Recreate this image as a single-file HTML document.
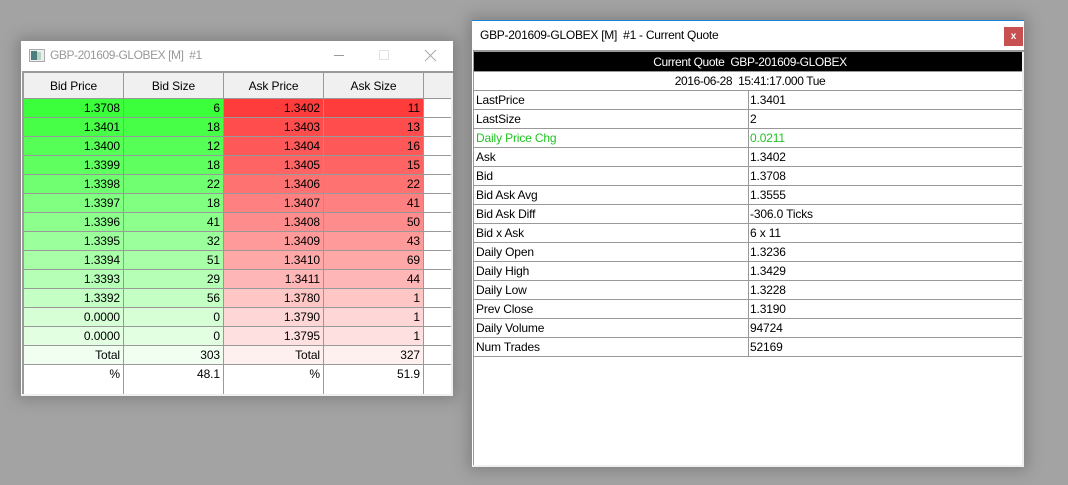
<!DOCTYPE html>
<html><head><meta charset="utf-8"><style>
html,body{margin:0;padding:0;width:1068px;height:485px;overflow:hidden;background:#a3a3a3;font:12px/18px "Liberation Sans",sans-serif;color:#000}
div{position:absolute;box-sizing:border-box;white-space:pre}
#p{left:0;top:0;width:1068px;height:485px;overflow:hidden;background:#a3a3a3}
.win{background:#fff;box-shadow:0 0 14px 3px rgba(60,60,60,.35)}
.r{left:3px;width:400px;height:19px;border-bottom:1px solid #999;letter-spacing:-.1px}
.r div{top:0;width:100px;height:18px;border-right:1px solid #999;text-align:right;padding-right:3px}
.r div:nth-child(2){left:100px}.r div:nth-child(3){left:200px}.r div:nth-child(4){left:300px}
.l{left:403px;width:27px;height:1px;background:#999}
.h div{text-align:center;padding:0;height:25px;line-height:27px;background:#f0f0f0}
.q{left:2px;width:548px;height:19px;border-bottom:1px solid #999;letter-spacing:-.15px}
.q div{top:0;height:18px;padding-left:2px}
.q div:first-child{left:0;width:275px;border-right:1px solid #999}
.q div:last-child{left:275px;width:270px;padding-left:1px}
.g{color:#1fc41f}
.c{text-align:center}
</style></head><body>
<div id="p">
<div class="win" style="left:21px;top:41px;width:432px;height:355px">
  <svg style="position:absolute;left:8px;top:8px" width="16" height="13"><rect x=".5" y=".5" width="15" height="12" fill="#eee" stroke="#aaa"/><rect x="2" y="2" width="6" height="9" fill="#4e7f80"/><rect x="8" y="3" width="4" height="8" fill="#b8d4c8"/></svg>
  <div style="left:29px;top:5px;color:#999;letter-spacing:-.44px">GBP-201609-GLOBEX [M]  #1</div>
  <svg style="position:absolute;left:312px;top:8px" width="110" height="14" fill="none"><path d="M1 6.5H11" stroke="#999"/><rect x="46.500" y="1.500" width="9" height="9" stroke="#e2e2e2"/><path d="M92 1L103 12M103 1L92 12" stroke="#aaa"/></svg>
  <div style="left:1px;top:30px;width:431px;height:2px;background:#999"></div>
  <div style="left:1px;top:30px;width:2px;height:324px;background:#999"></div>
  <div style="left:0;top:353px;width:432px;height:2px;background:#f0f0f0"></div>
  <div style="left:430px;top:32px;width:2px;height:323px;background:#f0f0f0"></div>
  <div class="r h" style="top:32px;height:26px"><div style="left:0">Bid Price</div><div>Bid Size</div><div>Ask Price</div><div>Ask Size</div></div>
  <div style="left:403px;top:32px;width:27px;height:25px;background:#f0f0f0"></div>
  <div class="r" style="top:58px"><div style="left:0;background:#3cff3c">1.3708</div><div style="background:#3cff3c">6</div><div style="background:#ff3c3c">1.3402</div><div style="background:#ff3c3c">11</div></div>
  <div class="r" style="top:77px"><div style="left:0;background:#46ff46">1.3401</div><div style="background:#46ff46">18</div><div style="background:#ff4c4c">1.3403</div><div style="background:#ff4c4c">13</div></div>
  <div class="r" style="top:96px"><div style="left:0;background:#55ff55">1.3400</div><div style="background:#55ff55">12</div><div style="background:#ff5858">1.3404</div><div style="background:#ff5858">16</div></div>
  <div class="r" style="top:115px"><div style="left:0;background:#60ff60">1.3399</div><div style="background:#60ff60">18</div><div style="background:#ff6464">1.3405</div><div style="background:#ff6464">15</div></div>
  <div class="r" style="top:134px"><div style="left:0;background:#70ff70">1.3398</div><div style="background:#70ff70">22</div><div style="background:#ff7272">1.3406</div><div style="background:#ff7272">22</div></div>
  <div class="r" style="top:153px"><div style="left:0;background:#80ff80">1.3397</div><div style="background:#80ff80">18</div><div style="background:#ff8080">1.3407</div><div style="background:#ff8080">41</div></div>
  <div class="r" style="top:172px"><div style="left:0;background:#8dff8d">1.3396</div><div style="background:#8dff8d">41</div><div style="background:#ff8c8c">1.3408</div><div style="background:#ff8c8c">50</div></div>
  <div class="r" style="top:191px"><div style="left:0;background:#9bff9b">1.3395</div><div style="background:#9bff9b">32</div><div style="background:#ff9a9a">1.3409</div><div style="background:#ff9a9a">43</div></div>
  <div class="r" style="top:210px"><div style="left:0;background:#a8ffa8">1.3394</div><div style="background:#a8ffa8">51</div><div style="background:#ffa8a8">1.3410</div><div style="background:#ffa8a8">69</div></div>
  <div class="r" style="top:229px"><div style="left:0;background:#b6ffb6">1.3393</div><div style="background:#b6ffb6">29</div><div style="background:#ffb6b6">1.3411</div><div style="background:#ffb6b6">44</div></div>
  <div class="r" style="top:248px"><div style="left:0;background:#c4ffc4">1.3392</div><div style="background:#c4ffc4">56</div><div style="background:#ffc6c6">1.3780</div><div style="background:#ffc6c6">1</div></div>
  <div class="r" style="top:267px"><div style="left:0;background:#d6ffd6">0.0000</div><div style="background:#d6ffd6">0</div><div style="background:#ffd6d6">1.3790</div><div style="background:#ffd6d6">1</div></div>
  <div class="r" style="top:286px"><div style="left:0;background:#e2ffe2">0.0000</div><div style="background:#e2ffe2">0</div><div style="background:#ffe0e0">1.3795</div><div style="background:#ffe0e0">1</div></div>
  <div class="r" style="top:305px"><div style="left:0;background:#f0fff0">Total</div><div style="background:#f0fff0">303</div><div style="background:#fff0f0">Total</div><div style="background:#fff0f0">327</div></div>
  <div class="r" style="top:324px;height:30px;border:0"><div style="left:0;height:29px">%</div><div style="height:29px">48.1</div><div style="height:29px">%</div><div style="height:29px">51.9</div></div>
  <div class="l" style="top:57px"></div><div class="l" style="top:76px"></div><div class="l" style="top:95px"></div><div class="l" style="top:114px"></div><div class="l" style="top:133px"></div><div class="l" style="top:152px"></div><div class="l" style="top:171px"></div><div class="l" style="top:190px"></div><div class="l" style="top:209px"></div><div class="l" style="top:228px"></div><div class="l" style="top:247px"></div><div class="l" style="top:266px"></div><div class="l" style="top:285px"></div><div class="l" style="top:304px"></div><div class="l" style="top:323px"></div>
</div>

<div class="win" style="left:472px;top:20px;width:552px;height:447px;border-top:1px solid #1883d7">
  <div style="left:8px;top:5px;letter-spacing:-.27px">GBP-201609-GLOBEX [M]  #1 - Current Quote</div>
  <div style="left:532px;top:6px;width:19px;height:19px;background:#c75050;color:#fff;font:bold 10px/20px 'Liberation Sans',sans-serif;text-align:center">x</div>
  <div style="left:1px;top:29px;width:551px;height:2px;background:#999"></div>
  <div style="left:1px;top:29px;width:1px;height:416px;background:#999"></div>
  <div style="left:0;top:444px;width:552px;height:2px;background:#f0f0f0"></div>
  <div style="left:550px;top:31px;width:2px;height:415px;background:#f0f0f0"></div>
  <div class="q" style="top:31px;height:20px;background:#000;color:#fff;text-align:center;padding:1px 0 0 4px;letter-spacing:-.37px">Current Quote  GBP-201609-GLOBEX</div>
  <div class="q c" style="top:51px;padding-left:4px;letter-spacing:-.39px">2016-06-28  15:41:17.000 Tue</div>
  <div class="q" style="top:70px"><div>LastPrice</div><div>1.3401</div></div>
  <div class="q" style="top:89px"><div>LastSize</div><div>2</div></div>
  <div class="q g" style="top:108px"><div>Daily Price Chg</div><div>0.0211</div></div>
  <div class="q" style="top:127px"><div>Ask</div><div>1.3402</div></div>
  <div class="q" style="top:146px"><div>Bid</div><div>1.3708</div></div>
  <div class="q" style="top:165px"><div>Bid Ask Avg</div><div>1.3555</div></div>
  <div class="q" style="top:184px"><div>Bid Ask Diff</div><div>-306.0 Ticks</div></div>
  <div class="q" style="top:203px"><div>Bid x Ask</div><div>6 x 11</div></div>
  <div class="q" style="top:222px"><div>Daily Open</div><div>1.3236</div></div>
  <div class="q" style="top:241px"><div>Daily High</div><div>1.3429</div></div>
  <div class="q" style="top:260px"><div>Daily Low</div><div>1.3228</div></div>
  <div class="q" style="top:279px"><div>Prev Close</div><div>1.3190</div></div>
  <div class="q" style="top:298px"><div>Daily Volume</div><div>94724</div></div>
  <div class="q" style="top:317px"><div>Num Trades</div><div>52169</div></div>
</div>
</div>
</body></html>
